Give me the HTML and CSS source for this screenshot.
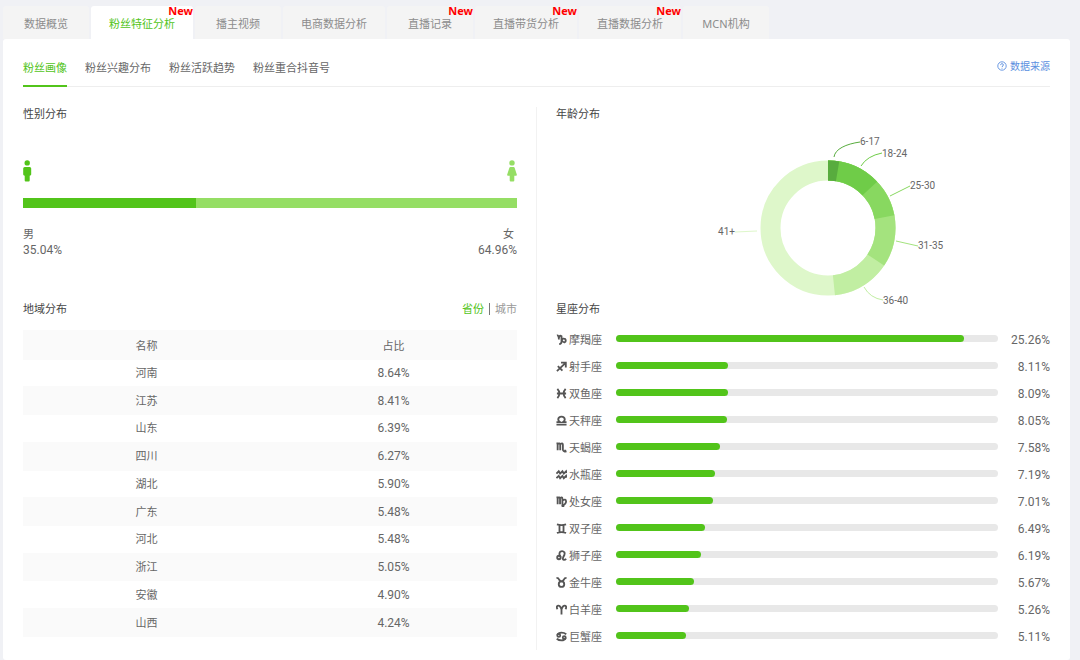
FILE: index.html
```html
<!DOCTYPE html>
<html lang="zh-CN">
<head>
<meta charset="utf-8">
<title>粉丝特征分析</title>
<link rel="stylesheet" href="styles.css">
</head>
<body>
<nav class="tabs">
  <a class="tab" href="#">数据概览</a>
  <a class="tab tab-active" href="#">粉丝特征分析<span class="badge">New</span></a>
  <a class="tab" href="#">播主视频</a>
  <a class="tab" href="#">电商数据分析</a>
  <a class="tab" href="#">直播记录<span class="badge">New</span></a>
  <a class="tab" href="#">直播带货分析<span class="badge">New</span></a>
  <a class="tab" href="#">直播数据分析<span class="badge">New</span></a>
  <a class="tab" href="#">MCN机构</a>
</nav>
<main class="card">
  <div class="subnav">
    <a class="subtab subtab-active" href="#">粉丝画像</a>
    <a class="subtab" href="#">粉丝兴趣分布</a>
    <a class="subtab" href="#">粉丝活跃趋势</a>
    <a class="subtab" href="#">粉丝重合抖音号</a>
    <a class="source" href="#">
      <svg width="10" height="10" viewBox="0 0 10 10" fill="none" stroke="currentColor"><circle cx="5" cy="5" r="4.2" stroke-width=".9"/><path d="M3.6 4.1C3.6 2.2 6.4 2.3 6.4 4C6.4 5 5 4.9 5 6M5 6.8V7.6"/></svg>
      数据来源
    </a>
  </div>
  <div class="columns">
    <div class="col col-left">
      <section>
        <h2 class="title">性别分布</h2>
        <div class="people">
          <svg width="9" height="22" viewBox="0 0 9 22" fill="#52c41a"><circle cx="4.2" cy="2.9" r="2.7"/><path d="M1.7 7H6.7Q8.2 7 8.2 8.5V14.5Q8.2 15.6 6.7 15.8V20.6Q6.7 21.6 5.7 21.6H2.7Q1.7 21.6 1.7 20.6V15.8Q.2 15.6 .2 14.5V8.5Q.2 7 1.7 7Z"/></svg>
          <svg width="10" height="22" viewBox="0 0 10 22" fill="#95de64"><circle cx="5" cy="2.9" r="2.7"/><path d="M3.4 7H6.6Q7.4 7 7.7 7.9L9.8 14.6Q10.1 15.8 9 15.8H7.3V20.6Q7.3 21.6 6.3 21.6H3.7Q2.7 21.6 2.7 20.6V15.8H1Q-.1 15.8 .2 14.6L2.3 7.9Q2.6 7 3.4 7Z"/></svg>
        </div>
        <div class="gender-bar"><div class="gender-male" style="width:35.04%"></div></div>
        <div class="gender-text">
          <div>男<br><span class="num">35.04%</span></div>
          <div class="female"><span class="female-name">女</span><br><span class="num">64.96%</span></div>
        </div>
      </section>
      <section class="region">
        <div class="region-head">
          <h2 class="title">地域分布</h2>
          <div class="switch"><button class="switch-on">省份</button><span class="switch-line"></span><button>城市</button></div>
        </div>
        <table class="region-table">
          <thead><tr><th>名称</th><th>占比</th></tr></thead>
          <tbody>
            <tr><td>河南</td><td class="num">8.64%</td></tr>
            <tr><td>江苏</td><td class="num">8.41%</td></tr>
            <tr><td>山东</td><td class="num">6.39%</td></tr>
            <tr><td>四川</td><td class="num">6.27%</td></tr>
            <tr><td>湖北</td><td class="num">5.90%</td></tr>
            <tr><td>广东</td><td class="num">5.48%</td></tr>
            <tr><td>河北</td><td class="num">5.48%</td></tr>
            <tr><td>浙江</td><td class="num">5.05%</td></tr>
            <tr><td>安徽</td><td class="num">4.90%</td></tr>
            <tr><td>山西</td><td class="num">4.24%</td></tr>
          </tbody>
        </table>
      </section>
    </div>
    <div class="col col-right">
      <section>
        <h2 class="title">年龄分布</h2>
        <svg class="donut" viewBox="0 0 494 177">
          <g fill="none" stroke-width="20" transform="rotate(-90 272 103)">
            <circle cx="272" cy="103" r="57.5" pathLength="360" stroke="#def7ca"/>
            <circle cx="272" cy="103" r="57.5" pathLength="360" stroke="#c1eea2" stroke-dasharray="174 186"/>
            <circle cx="272" cy="103" r="57.5" pathLength="360" stroke="#a4e37e" stroke-dasharray="123.8 236.2"/>
            <circle cx="272" cy="103" r="57.5" pathLength="360" stroke="#88d860" stroke-dasharray="79 281"/>
            <circle cx="272" cy="103" r="57.5" pathLength="360" stroke="#6fcc48" stroke-dasharray="46.6 313.4"/>
            <circle cx="272" cy="103" r="57.5" pathLength="360" stroke="#58ac3e" stroke-dasharray="9.6 350.4"/>
          </g>
          <g fill="none">
            <path stroke="#58ac3e" d="M278 32C279 24 290 19 304 17"/>
            <path stroke="#6fcc48" d="M305 41Q311 31 326 28"/>
            <path stroke="#88d860" d="M334 71L354 61"/>
            <path stroke="#a4e37e" d="M340 116L362 121"/>
            <path stroke="#c1eea2" d="M308 162Q314 173 327 175"/>
            <path stroke="#def7ca" d="M201 106L179 107"/>
          </g>
          <g class="donut-label">
            <text x="304" y="20">6-17</text>
            <text x="326" y="32">18-24</text>
            <text x="354" y="64">25-30</text>
            <text x="362" y="124">31-35</text>
            <text x="327" y="179">36-40</text>
            <text x="179" y="110" text-anchor="end">41+</text>
          </g>
        </svg>
      </section>
      <section>
        <h2 class="title">星座分布</h2>
        <ul class="signs">
          <li class="sign"><svg class="glyph" viewBox="0 0 12 12"><path d="M1 1.5Q3 1 3.2 6M3.2 4Q4 .8 6 2.5V8.5Q6 10.8 3.5 11M6 7Q7.5 4 10 5.5Q11.5 8 9.5 9Q7.5 9.5 6 6.5"/></svg><span>摩羯座</span><div class="track"><div class="fill" style="width:91%"></div></div><span class="num pct">25.26%</span></li>
          <li class="sign"><svg class="glyph" viewBox="0 0 12 12"><path d="M1 11L10.5 2M5.5 1.8H10.7V7M2 5.5L7 10.5"/></svg><span>射手座</span><div class="track"><div class="fill" style="width:29.3%"></div></div><span class="num pct">8.11%</span></li>
          <li class="sign"><svg class="glyph" viewBox="0 0 12 12"><path d="M1.5 1Q6 6 1.5 11M10.5 1Q6 6 10.5 11M1 6H11"/></svg><span>双鱼座</span><div class="track"><div class="fill" style="width:29.2%"></div></div><span class="num pct">8.09%</span></li>
          <li class="sign"><svg class="glyph" viewBox="0 0 12 12"><path d="M.5 10.5H11.5M.5 7.8H4.3Q2.3 6.6 2.4 4.7Q2.7 1.7 6 1.7Q9.3 1.7 9.6 4.7Q9.7 6.6 7.7 7.8H11.5"/></svg><span>天秤座</span><div class="track"><div class="fill" style="width:29%"></div></div><span class="num pct">8.05%</span></li>
          <li class="sign"><svg class="glyph" viewBox="0 0 12 12"><path d="M.5 1.5H1.8V9M1.8 2.5Q4.6 .2 4.6 3V9M4.6 2.5Q7.5 .2 7.5 3V8.5Q7.7 10.8 11.5 10.2M10 8.5V11.5"/></svg><span>天蝎座</span><div class="track"><div class="fill" style="width:27.3%"></div></div><span class="num pct">7.58%</span></li>
          <li class="sign"><svg class="glyph" viewBox="0 0 12 12"><path d="M.5 5L3 2.5L4.5 5L7 2.5L8.5 5L11 2.5L11.5 4.5M.5 10L3 7.5L4.5 10L7 7.5L8.5 10L11 7.5L11.5 9.5"/></svg><span>水瓶座</span><div class="track"><div class="fill" style="width:25.9%"></div></div><span class="num pct">7.19%</span></li>
          <li class="sign"><svg class="glyph" viewBox="0 0 12 12"><path d="M.5 1.5H1.8V9M1.8 2.5Q4.4 .2 4.4 3V9M4.4 2.5Q7 .2 7 3V9Q7.3 10.5 9 11.5M7 5Q10.8 2.5 11 6Q11 9 6 11"/></svg><span>处女座</span><div class="track"><div class="fill" style="width:25.3%"></div></div><span class="num pct">7.01%</span></li>
          <li class="sign"><svg class="glyph" viewBox="0 0 12 12"><path d="M1 1.5Q6 3 11 1.5M1 10.8Q6 9 11 10.8M3.8 2V10M8.2 2V10"/></svg><span>双子座</span><div class="track"><div class="fill" style="width:23.4%"></div></div><span class="num pct">6.49%</span></li>
          <li class="sign"><svg class="glyph" viewBox="0 0 12 12"><circle cx="3.2" cy="8.2" r="1.9"/><path d="M5 7.5Q2.8 4 4.5 2Q7.2 .2 9.2 2.5Q10 4.5 8 7.5Q6.8 10.5 8.5 10.8Q10 11 11 9.5"/></svg><span>狮子座</span><div class="track"><div class="fill" style="width:22.3%"></div></div><span class="num pct">6.19%</span></li>
          <li class="sign"><svg class="glyph" viewBox="0 0 12 12"><circle cx="6" cy="7.8" r="3"/><path d="M.5 1Q2.8 1 3.5 3Q4.3 4.7 6 4.7Q7.7 4.7 8.5 3Q9.2 1 11.5 1"/></svg><span>金牛座</span><div class="track"><div class="fill" style="width:20.5%"></div></div><span class="num pct">5.67%</span></li>
          <li class="sign"><svg class="glyph" viewBox="0 0 12 12"><path d="M1.7 5.5Q0 3.5 1.6 2Q4.5 .8 6 6V11.5M10.3 5.5Q12 3.5 10.4 2Q7.5 .8 6 6"/></svg><span>白羊座</span><div class="track"><div class="fill" style="width:19%"></div></div><span class="num pct">5.26%</span></li>
          <li class="sign"><svg class="glyph" viewBox="0 0 12 12"><circle cx="3" cy="4.8" r="1.6"/><circle cx="9" cy="7.2" r="1.6"/><path d="M1.4 4.5Q2.5 1.8 6 1.8Q9 1.8 11.2 3.5M10.6 7.5Q9.5 10.3 6 10.3Q3 10.3 .8 8.5"/></svg><span>巨蟹座</span><div class="track"><div class="fill" style="width:18.4%"></div></div><span class="num pct">5.11%</span></li>
        </ul>
      </section>
    </div>
  </div>
</main>
</body>
</html>
```
FILE: styles.css
```css
* { box-sizing: border-box; }
body {
  margin: 0;
  min-height: 100vh;
  display: flex;
  flex-direction: column;
  padding: 6px 10px 0 3px;
  background: #f0f1f5;
  color: #666;
  font: 11px/16px "Noto Sans", "Noto Sans CJK SC", sans-serif;
}
a { color: inherit; text-decoration: none; }
button { padding: 0; border: 0; background: none; color: inherit; font: inherit; cursor: pointer; }

.tabs { display: flex; gap: 2px; }
.tab {
  position: relative;
  min-width: 86px;
  height: 33px;
  padding: 0 18px;
  border-radius: 3px 3px 0 0;
  background: #f4f4f4;
  color: #8c8c8c;
  line-height: 36px;
  text-align: center;
  white-space: nowrap;
}
.tab-active { background: #fff; color: #52c41a; }
.badge {
  position: absolute;
  top: -3px;
  right: 0;
  color: #f00;
  font-weight: 700;
  line-height: 16px;
}

.card { flex: 1; padding: 0 20px; border-radius: 3px; background: #fff; }
.subnav { display: flex; gap: 18px; height: 48px; border-bottom: 1px solid #eee; }
.subtab { height: 48px; line-height: 58px; }
.subtab-active { border-bottom: 2px solid #52c41a; color: #52c41a; }
.source {
  display: flex;
  align-items: center;
  gap: 3px;
  height: 54px;
  margin-left: auto;
  color: #5b8fe0;
  font-size: 10px;
}

.columns { display: flex; margin-top: 20px; }
.col { flex: 1; min-width: 0; }
.col-left { padding-right: 19px; border-right: 1px solid #f2f2f2; }
.col-right { padding-left: 19px; }
.title { margin: 0; color: #444; font-size: 11px; font-weight: 400; line-height: 14px; }
.num { font-family: Roboto, "Noto Sans", sans-serif; font-size: 12px; }

.people { display: flex; justify-content: space-between; margin-top: 39px; }
.gender-bar { height: 10px; margin-top: 16px; background: #95de64; }
.gender-male { height: 100%; background: #52c41a; }
.gender-text { display: flex; justify-content: space-between; margin-top: 18px; }
.female { text-align: right; }
.female-name { margin-right: 3px; }

.region { margin-top: 44px; }
.region-head { display: flex; justify-content: space-between; }
.switch { display: flex; gap: 5px; color: #999; line-height: 14px; }
.switch-on { color: #52c41a; }
.switch-line { width: 1px; height: 12px; margin-top: 1px; background: #777; }
.region-table {
  width: 100%;
  height: 307px;
  margin-top: 14px;
  border-collapse: collapse;
  table-layout: fixed;
  text-align: center;
}
.region-table th { height: 30px; padding: 2px 0 0; font-weight: 400; }
.region-table td { padding: 0; border-bottom: 1px solid #fafafa; }
.region-table thead, .region-table tbody tr:nth-child(even) { background: #fafafa; }

.donut { display: block; width: 100%; margin-top: 4px; overflow: visible; }
.donut-label { fill: #666; font-family: Roboto, sans-serif; font-size: 10px; }

.signs { margin: 10px 0 0; padding: 0; list-style: none; }
.sign { display: flex; align-items: center; height: 27px; }
.glyph {
  width: 11px;
  height: 11px;
  margin-right: 2px;
  fill: none;
  stroke: #555;
  stroke-width: 2;
}
.track { flex: 1; height: 7px; margin: 0 12px 2px 14px; border-radius: 4px; background: #e8e8e8; }
.fill { height: 100%; border-radius: 4px; background: #52c41a; }
.pct { width: 40px; text-align: right; }
```
